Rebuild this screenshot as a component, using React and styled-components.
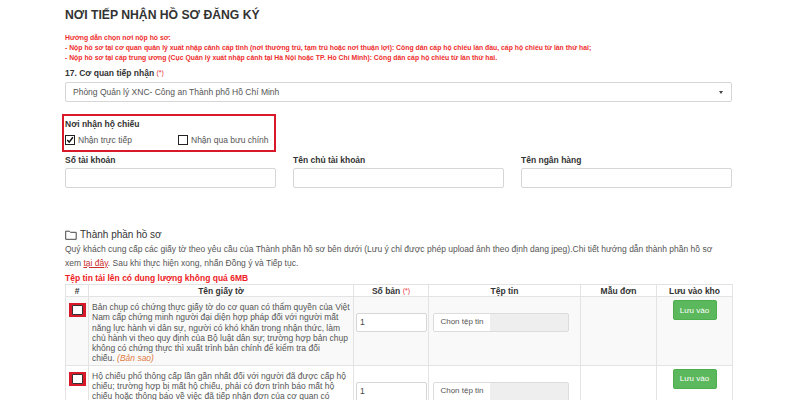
import React from "react";
import styled, { createGlobalStyle } from "styled-components";

const GlobalStyle = createGlobalStyle`
  html, body { margin: 0; padding: 0; overflow: hidden; background: #fff; }
  body { font-family: "Liberation Sans", Arial, sans-serif; color: #555; }
  * { box-sizing: border-box; }
`;

const Page = styled.div`
  width: 800px;
  height: 400px;
  padding: 8px 68px 0 65px;
  overflow: hidden;
`;

const Title = styled.h1`
  margin: 0;
  font-size: 12.2px;
  line-height: 15px;
  font-weight: bold;
  color: #333;
`;

const Notes = styled.div`
  margin-top: 10px;
  font-size: 6.85px;
  line-height: 10px;
  font-weight: bold;
  color: #ee2d2d;
`;

const Label = styled.div`
  font-size: 8.5px;
  line-height: 12px;
  font-weight: bold;
  color: #333;
`;

const Req = styled.span`
  color: #e8303a;
  font-weight: normal;
  font-size: 7px;
  vertical-align: 1px;
`;

const FieldLabel = styled(Label)`
  margin-top: ${(p) => p.$mt || 0}px;
`;

const Select = styled.div`
  margin-top: 3px;
  height: 20px;
  border: 1px solid #d6d6d6;
  border-radius: 2px;
  display: flex;
  align-items: center;
  justify-content: space-between;
  padding: 0 8px 0 7px;
  font-size: 8.5px;
  color: #555;
`;

const Caret = styled.span`
  width: 0;
  height: 0;
  border-left: 2.5px solid transparent;
  border-right: 2.5px solid transparent;
  border-top: 3px solid #444;
`;

const Highlight = styled.div`
  margin-top: 12px;
  margin-left: -3px;
  width: 214px;
  height: 38px;
  border: 2px solid #d7192a;
  padding: 2px 0 0 1px;
`;

const CheckRow = styled.div`
  display: flex;
  align-items: center;
  margin-top: 5px;
`;

const CheckItem = styled.label`
  display: flex;
  align-items: center;
  gap: 3px;
  font-size: 8.5px;
  color: #555;
  width: ${(p) => p.$w || "auto"};
`;

const Box = styled.span`
  width: 10px;
  height: 10px;
  border: 1px solid #222;
  background: #fff;
  display: inline-flex;
  align-items: center;
  justify-content: center;
`;

const Grid = styled.div`
  display: grid;
  grid-template-columns: repeat(3, 1fr);
  column-gap: 17px;
  margin-top: 2px;
`;

const Field = styled.div`
  display: flex;
  flex-direction: column;
  gap: 2px;
`;

const Input = styled.div`
  height: 20px;
  border: 1px solid #d6d6d6;
  border-radius: 2px;
  background: #fff;
`;

const SectionTitle = styled.div`
  margin-top: 40px;
  display: flex;
  align-items: center;
  gap: 3px;
  font-size: 10px;
  line-height: 13px;
  color: #333;
`;

const Para = styled.p`
  margin: 2px 0 0;
  padding-right: 14px;
  font-size: 8.5px;
  line-height: 13.5px;
  color: #555;
`;

const Link = styled.a`
  color: #c9302c;
  text-decoration: underline;
`;

const SizeNote = styled.div`
  margin-top: 3px;
  font-size: 8.5px;
  line-height: 11px;
  font-weight: bold;
  color: #ee1c24;
`;

const Table = styled.table`
  width: 667px;
  border-collapse: collapse;
  table-layout: fixed;
`;

const Th = styled.th`
  border: 1px solid #e3e3e3;
  font-size: 8.5px;
  line-height: 10px;
  font-weight: bold;
  color: #333;
  text-align: center;
  padding: 0;
  height: 12px;
`;

const Tr = styled.tr`
  background: ${(p) => (p.$striped ? "#f9f9f9" : "#fff")};
`;

const Td = styled.td`
  border: 1px solid #e3e3e3;
  vertical-align: top;
  text-align: ${(p) => p.$align || "left"};
  padding: ${(p) => p.$pad || "5px 0 1px 3px"};
  font-size: 8.5px;
  line-height: 10.3px;
  color: #555;
`;

const RedCheck = styled.span`
  display: inline-flex;
  align-items: center;
  justify-content: center;
  width: 17px;
  height: 14px;
  background: #d7192a;
  padding: 2px;
`;

const InnerBox = styled.span`
  width: 11px;
  height: 10px;
  border: 1.5px solid #333;
  background: #fff;
  border-radius: 1px;
`;

const Copy = styled.em`
  color: #e07a3f;
  font-style: italic;
`;

const NumInput = styled.div`
  height: 19px;
  width: 71px;
  border: 1px solid #d6d6d6;
  border-radius: 2px;
  background: #fff;
  padding-left: 3px;
  display: flex;
  align-items: center;
  color: #444;
`;

const FileInput = styled.div`
  width: 136px;
  height: 19px;
  border: 1px solid #dcdcdc;
  border-radius: 2px;
  background: #eeeeee;
  display: flex;
  overflow: hidden;
`;

const FileBtn = styled.span`
  width: 56px;
  background: #fff;
  display: flex;
  align-items: center;
  justify-content: center;
  font-size: 8px;
  color: #555;
`;

const SaveBtn = styled.button`
  width: 44px;
  height: 20px;
  border: 1px solid #4cae4c;
  border-radius: 2px;
  background: #5cb85c;
  color: #fff;
  font-family: inherit;
  font-size: 8px;
  padding: 0;
  cursor: pointer;
`;

const FolderIcon = () => (
  <svg width="12" height="10" viewBox="0 0 12 10" fill="none">
    <path
      d="M0.7 1.2 H4.4 L5.4 2.3 H11.2 V9.3 H0.7 Z"
      stroke="#333"
      strokeWidth="0.9"
      strokeLinejoin="round"
    />
  </svg>
);

const Tick = () => (
  <svg width="10" height="10" viewBox="0 0 10 10">
    <path d="M1.6 5 L4 7.6 L8.6 1.6" stroke="#111" strokeWidth="1.8" fill="none" />
  </svg>
);

const rows = [
  {
    lines: [
      "Bản chụp có chứng thực giấy tờ do cơ quan có thẩm quyền của Việt",
      "Nam cấp chứng minh người đại diện hợp pháp đối với người mất",
      "năng lực hành vi dân sự, người có khó khăn trong nhận thức, làm",
      "chủ hành vi theo quy định của Bộ luật dân sự; trường hợp bản chụp",
      "không có chứng thực thì xuất trình bản chính để kiểm tra đối",
      "chiếu.",
    ],
    tag: "(Bản sao)",
  },
  {
    lines: [
      "Hộ chiếu phổ thông cấp lần gần nhất đối với người đã được cấp hộ",
      "chiếu; trường hợp bị mất hộ chiếu, phải có đơn trình báo mất hộ",
      "chiếu hoặc thông báo về việc đã tiếp nhận đơn của cơ quan có",
      "thẩm quyền nơi tiếp nhận đơn trình báo mất hộ chiếu.",
    ],
    tag: "(Bản chính)",
  },
];

export default function App() {
  return (
    <>
      <GlobalStyle />
      <Page>
        <Title>NƠI TIẾP NHẬN HỒ SƠ ĐĂNG KÝ</Title>
        <Notes>
          <div>Hướng dẫn chọn nơi nộp hồ sơ:</div>
          <div>
            - Nộp hồ sơ tại cơ quan quản lý xuất nhập cảnh cấp tỉnh (nơi thường trú, tạm trú hoặc nơi thuận lợi): Công dân cấp hộ chiếu lần đầu, cấp hộ chiếu từ lần thứ hai;
          </div>
          <div>
            - Nộp hồ sơ tại cấp trung ương (Cục Quản lý xuất nhập cảnh tại Hà Nội hoặc TP. Hồ Chí Minh): Công dân cấp hộ chiếu từ lần thứ hai.
          </div>
        </Notes>
        <FieldLabel $mt={4}>
          17. Cơ quan tiếp nhận <Req>(*)</Req>
        </FieldLabel>
        <Select>
          <span>Phòng Quản lý XNC- Công an Thành phố Hồ Chí Minh</span>
          <Caret />
        </Select>
        <Highlight>
          <Label>Nơi nhận hộ chiếu</Label>
          <CheckRow>
            <CheckItem $w="113px">
              <Box>
                <Tick />
              </Box>
              Nhận trực tiếp
            </CheckItem>
            <CheckItem>
              <Box />
              Nhận qua bưu chính
            </CheckItem>
          </CheckRow>
        </Highlight>
        <Grid>
          <Field>
            <Label>Số tài khoản</Label>
            <Input />
          </Field>
          <Field>
            <Label>Tên chủ tài khoản</Label>
            <Input />
          </Field>
          <Field>
            <Label>Tên ngân hàng</Label>
            <Input />
          </Field>
        </Grid>
        <SectionTitle>
          <FolderIcon />
          Thành phần hồ sơ
        </SectionTitle>
        <Para>
          Quý khách cung cấp các giấy tờ theo yêu cầu của Thành phần hồ sơ bên dưới (Lưu ý chỉ được phép upload ảnh theo định dang jpeg).Chi tiết hướng dẫn thành phần hồ sơ xem <Link>tại đây</Link>. Sau khi thực hiện xong, nhấn Đồng ý và Tiếp tục.
        </Para>
        <SizeNote>Tệp tin tải lên có dung lượng không quá 6MB</SizeNote>
        <Table>
          <colgroup>
            <col style={{ width: 23 }} />
            <col style={{ width: 265 }} />
            <col style={{ width: 75 }} />
            <col style={{ width: 152 }} />
            <col style={{ width: 76 }} />
            <col style={{ width: 76 }} />
          </colgroup>
          <thead>
            <tr>
              <Th>#</Th>
              <Th>Tên giấy tờ</Th>
              <Th>
                Số bản <Req>(*)</Req>
              </Th>
              <Th>Tệp tin</Th>
              <Th>Mẫu đơn</Th>
              <Th>Lưu vào kho</Th>
            </tr>
          </thead>
          <tbody>
            {rows.map((r, i) => (
              <Tr key={i} $striped={i % 2 === 0}>
                <Td $align="center" $pad="6px 0 0">
                  <RedCheck>
                    <InnerBox />
                  </RedCheck>
                </Td>
                <Td>
                  {r.lines.map((l, j) => (
                    <React.Fragment key={j}>
                      {j > 0 && <br />}
                      {l}
                    </React.Fragment>
                  ))}{" "}
                  <Copy>{r.tag}</Copy>
                </Td>
                <Td $pad="16px 2px 0">
                  <NumInput>1</NumInput>
                </Td>
                <Td $pad="16px 4px 0">
                  <FileInput>
                    <FileBtn>Chọn tệp tin</FileBtn>
                  </FileInput>
                </Td>
                <Td />
                <Td $align="center" $pad="3px 0 0">
                  <SaveBtn>Lưu vào</SaveBtn>
                </Td>
              </Tr>
            ))}
          </tbody>
        </Table>
      </Page>
    </>
  );
}
